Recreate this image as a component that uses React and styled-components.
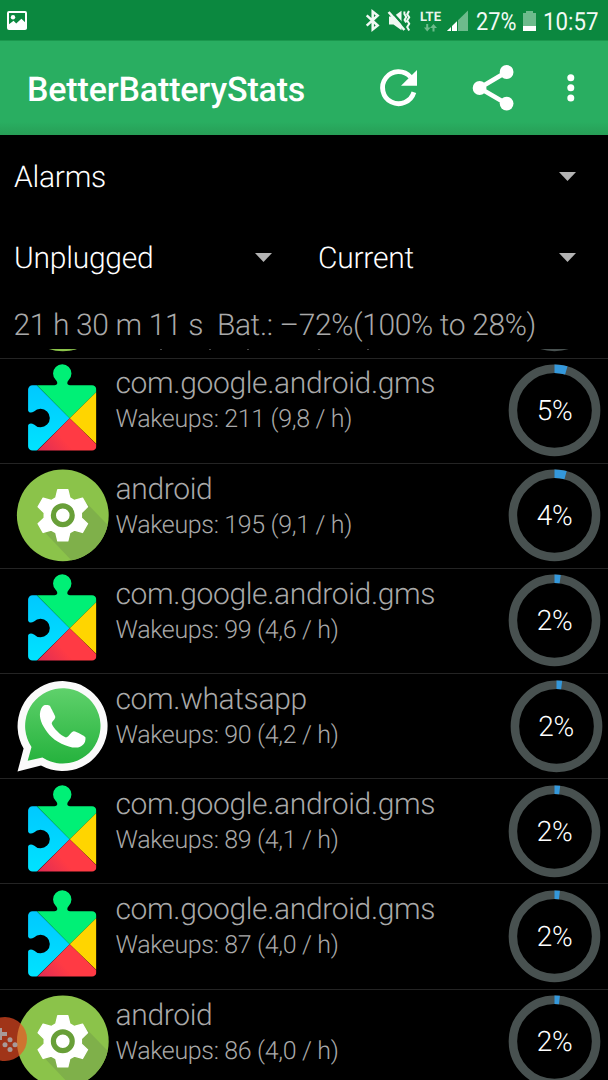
import React from 'react';
import styled, { createGlobalStyle } from 'styled-components';

const GlobalStyle = createGlobalStyle`
    * { box-sizing: border-box; }
    html, body {
        margin: 0;
        background: #000;
        overflow: hidden;
        font-family: Roboto, "Liberation Sans", sans-serif;
        text-rendering: geometricPrecision;
    }
    svg { display: block; flex: none; }
`

const Screen = styled.div`
    position: relative;
    display: flex;
    flex-direction: column;
    width: 608px;
    height: 1080px;
    overflow: hidden;
    background: #000;
`

const StatusBar = styled.div`
    display: flex;
    justify-content: space-between;
    height: 41px;
    background: #0b883f;
    border-bottom: 1px solid #1b984e;
`

const StatusGroup = styled.div`
    display: flex;
    height: 40px;
`

const StatusText = styled.span`
    display: block;
    width: ${props => props.$width}px;
    margin-left: ${props => props.$gap}px;
    font-size: 25px;
    line-height: 45px;
    color: #f3faf5;
    white-space: nowrap;
    transform: scaleX(${props => props.$squeeze});
    transform-origin: 0 0;
`

const Network = styled.div`
    width: 24px;
    margin-left: 8px;
    padding-top: 11px;
    font-size: 13px;
    font-weight: 700;
    line-height: 13px;
    color: #e7f4ec;
`

const Toolbar = styled.header`
    display: flex;
    align-items: center;
    height: 94px;
    padding-left: 27px;
    background: linear-gradient(#29ae61 86%, #279e56);
`

const Title = styled.h1`
    flex: 1;
    margin: 0;
    padding-top: 3px;
    font-size: 34px;
    font-weight: 500;
    letter-spacing: -0.17px;
    color: #fff;
`

const SpinnerRow = styled.div`
    display: flex;
    height: ${props => props.$height}px;
`

const Spinner = styled.div`
    display: flex;
    flex: 1;
    align-items: center;
    justify-content: space-between;
    padding: 0 32px 0 14px;
    font-size: 30px;
    font-weight: 300;
    letter-spacing: -0.24px;
    color: #fff;
`

const SpinnerText = styled.span`
    padding-top: 2px;
`

const Summary = styled.div`
    height: 51px;
    padding-left: 13.500px;
    font-size: 30px;
    font-weight: 300;
    line-height: 56px;
    letter-spacing: -0.37px;
    color: #a9a9a9;
    white-space: pre;
`

const List = styled.div`
    flex: 1;
    min-height: 0;
    overflow: hidden;
`

const Item = styled.div`
    display: flex;
    height: 105.2px;
    margin-top: ${props => props.$scrolled || 0}px;
    padding: 5.6px 7px 0 16px;
    border-top: 1px solid #242424;
`

const Details = styled.div`
    position: relative;
    flex: 1;
    padding-left: 6.500px;
    font-weight: 300;
    letter-spacing: -0.35px;
    color: #a9a9a9;
    white-space: nowrap;
`

const Name = styled.div`
    margin-top: 2.400px;
    font-size: 30px;
    line-height: 36px;
`

const Wakeups = styled.div`
    font-size: 25px;
    line-height: 35px;
`

// descender tip of the line that is scrolled under the header
const Tip = styled.span`
    position: absolute;
    left: ${props => props.$x}px;
    top: 90px;
    width: 2px;
    height: 1.500px;
    background: #4a4a4a;
`

const RingBox = styled.div`
    position: relative;
    width: 93px;
    height: 93px;
    margin-right: ${props => props.$shift ? -1.500 : 0}px;
`

const RingLabel = styled.span`
    position: absolute;
    inset: 0;
    font-size: 28px;
    font-weight: 300;
    line-height: 94px;
    letter-spacing: -0.3px;
    text-align: center;
    color: #fff;
`

const Bubble = styled.div`
    position: absolute;
    left: -17px;
    top: 1017px;
    width: 44px;
    height: 44px;
    border-radius: 50%;
    background: rgba(239, 78, 36, 0.67);
`

const PictureIcon = () => (
    <svg width="34" height="40" viewBox="0 0 34 40">
        <rect x="8" y="12" width="18" height="17" rx="1" fill="none" stroke="#fff" strokeWidth="2" />
        <circle cx="13" cy="17.2" r="2.2" fill="#fff" />
        <path d="M8 25l5.6-4.2 2.6 2.6 5.2-4.6 5 4.6V29H8z" fill="#fff" />
    </svg>
)

const StatusIcons = () => (
    <svg width="50" height="40" viewBox="362 0 50 40">
        <path d="M366.700 15.300l11 10.200-5 4V11.500l5 4-11 10.200" fill="none" stroke="#f0f8f3" strokeWidth="2.500" />
        <path d="M389 16.500h4.500l8-5.800v19.600l-8-5.800H389z" fill="#f0f8f3" />
        <path d="M390.500 10.500l16 18" stroke="#0b883f" strokeWidth="2.400" />
        <path d="M388.600 12l15.800 18" stroke="#f0f8f3" strokeWidth="2.600" />
        <path d="M404.400 11.500v2.500l1.800 3-1.600 3 1.600 2.500M409 11l-1.800 3.200 2 3-2 3.400 2 3.200-2 3.200 2 3.400" fill="none" stroke="#f0f8f3" strokeWidth="2" />
    </svg>
)

const Arrows = () => (
    <svg width="22" height="8" viewBox="0 0 22 8">
        <path d="M6.200 0h2v3.500h2.400L7.200 7.500 4 3.500h2.200zM12.500 7.500h2V4H17L13.500 0l-3.400 4h2.400z" fill="#6dbb8c" />
    </svg>
)

const SignalIcon = () => (
    <svg width="26" height="40" viewBox="444 0 26 40">
        <path d="M447 31L468 10.500V31z" fill="#6dbb8c" />
        <path d="M447 31l10-9.800V31z" fill="#fff" />
        <path d="M451.500 25v6M457.500 20v11" stroke="#0b883f" strokeWidth="1" />
    </svg>
)

const BatteryIcon = () => (
    <svg width="18" height="40" viewBox="520 0 18 40">
        <path d="M526 11h7v2h3v18h-13V13h3z" fill="#6dbb8c" />
        <path d="M523 26h13v5h-13z" fill="#fff" />
    </svg>
)

const ToolbarIcons = () => (
    <svg width="238" height="94" viewBox="370 41 238 94">
        <path d="M413.900 92.300A16 16 0 1 1 410.500 77" fill="none" stroke="#fff" strokeWidth="4.800" />
        <path d="M417 70v15.700h-16z" fill="#fff" />
        <path d="M506.500 72L479.500 88l27 15.700" fill="none" stroke="#fff" strokeWidth="4.600" />
        <g fill="#fff">
            <circle cx="506.600" cy="72" r="6.900" />
            <circle cx="479.600" cy="88" r="6.900" />
            <circle cx="506.600" cy="103.600" r="6.900" />
            <circle cx="570.800" cy="77.700" r="3.500" />
            <circle cx="570.800" cy="87.800" r="3.500" />
            <circle cx="570.800" cy="98" r="3.500" />
        </g>
    </svg>
)

const Caret = () => (
    <svg width="17" height="9" viewBox="0 0 17 9">
        <path d="M0 0h17L8.500 9z" fill="#b3b3b3" />
    </svg>
)

const PlayServicesIcon = ({ id }) => (
    <svg width="93" height="93" viewBox="16 364 93 93">
        <defs>
            <linearGradient id={`blue${id}`} x1="0" y1="0" x2="0" y2="1">
                <stop offset="0" stopColor="#00c0ff" />
                <stop offset="1" stopColor="#00e3ff" />
            </linearGradient>
            <linearGradient id={`red${id}`} x1="0" y1="1" x2="1" y2="0.5">
                <stop offset="0" stopColor="#dd2c55" />
                <stop offset="0.5" stopColor="#ff3a44" />
            </linearGradient>
            <clipPath id={`piece${id}`}>
                <path d="M32.500 385.200H54.500C57.500 385.200 58.200 382.500 55.800 380A9.200 9.200 0 1 1 68.700 380C66.400 382.500 67 385.200 70 385.200H92A4.400 4.400 0 0 1 96.400 389.600V446.200A4.400 4.400 0 0 1 92 450.600H32.500A4.400 4.400 0 0 1 28.100 446.200V425.500C28.500 423.500 31 422.500 34 424.400A9.200 9.200 0 1 0 34 411.600C31 413.500 28.500 412.500 28.100 410.500V389.600A4.400 4.400 0 0 1 32.500 385.200Z" />
            </clipPath>
        </defs>
        <g clipPath={`url(#piece${id})`}>
            <path d="M28 364v87h8.500l33.200-32.700L37 385.500z" fill={`url(#blue${id})`} />
            <path d="M50 364h46.400v28L69.700 418.300 37 385.200z" fill="#00f076" />
            <path d="M96.400 392v52L69.700 418.300z" fill="#ffd500" />
            <path d="M37 451l32.700-32.700 26.700 25.900V451z" fill={`url(#red${id})`} />
        </g>
    </svg>
)

// outline of the six-toothed cog, centred on 0,0
const gearPath = () => {
    let d = '';
    for (let i = 0; i < 6; i++) {
        const a = (i * Math.PI) / 3;
        [[-7, -17.4], [-5, -25.6], [5, -25.6], [7, -17.4]].forEach(([x, y]) => {
            const px = x * Math.cos(a) - y * Math.sin(a);
            const py = x * Math.sin(a) + y * Math.cos(a);
            d += `${d ? 'L' : 'M'}${px.toFixed(2)} ${py.toFixed(2)}`;
        });
    }
    return d + 'Z';
}

const AndroidIcon = ({ id }) => (
    <svg width="93" height="93" viewBox="-46.800 -46.300 93 93">
        <clipPath id={`disc${id}`}>
            <circle r="45.900" />
        </clipPath>
        <circle r="45.900" fill="#8bc34a" />
        <path d="M22-14L60 25 40 78 -20 15z" fill="#7fb04a" clipPath={`url(#disc${id})`} />
        <path d={gearPath()} fill="#fff" stroke="#fff" strokeWidth="1.400" strokeLinejoin="round" />
        <circle r="9.400" fill="#fff" stroke="#689f38" strokeWidth="5.200" />
    </svg>
)

const WhatsAppIcon = () => (
    <svg width="93" height="93" viewBox="16 679.600 93 93">
        <defs>
            <linearGradient id="chat" x1="0" y1="0" x2="0" y2="1">
                <stop offset="0" stopColor="#5fd16b" />
                <stop offset="1" stopColor="#25b23d" />
            </linearGradient>
        </defs>
        <path d="M17.500 771.200L23.600 748.200A45 45 0 1 1 41 765.200Z" fill="#fafafa" />
        <path d="M27.700 760.400L31.500 746.500A37.700 37.700 0 1 1 42.400 757.200Z" fill="url(#chat)" />
        <path d="M44 704.800C46 704.300 48.700 704.300 50 705.500C51.500 708.500 54.500 714 55.200 716C55.700 718.500 52.300 720.500 51.700 722.800C52.500 727 61 735.500 66 737C69 737 70.500 731.500 73.700 730.900C77 731.500 84.500 735.500 85.500 737C85.800 743 82.500 745.500 78 747C70 748.500 55.500 741.500 49.500 734.500C43.500 727.500 39.500 719.500 39.900 713.500C40.200 709.500 41.500 706.500 44 704.800Z" fill="#fff" />
    </svg>
)

const Ring = ({ percent, shift, label = true }) => {
    const r = 41.6;
    const arc = 2 * Math.PI * r;
    return (
        <RingBox $shift={shift}>
            <svg width="93" height="93" viewBox="0 0 93 93">
                <circle cx="46.500" cy="46.300" r={r} fill="none" stroke="#485150" strokeWidth="8.500" />
                <circle cx="46.500" cy="46.300" r={r} fill="none" stroke="#3498db" strokeWidth="8.500"
                    strokeDasharray={`${arc * percent / 100} ${arc}`} transform="rotate(-90 46.500 46.300)" />
            </svg>
            {label ? <RingLabel>{Math.round(percent)}%</RingLabel> : null}
        </RingBox>
    );
}

const icons = {
    'com.google.android.gms': PlayServicesIcon,
    'android': AndroidIcon,
    'com.whatsapp': WhatsAppIcon
};

const alarms = [
    { name: 'com.google.android.gms', wakeups: '211 (9,8 / h)', percent: 4.6 },
    { name: 'android', wakeups: '195 (9,1 / h)', percent: 4.3 },
    { name: 'com.google.android.gms', wakeups: '99 (4,6 / h)', percent: 2.2 },
    { name: 'com.whatsapp', wakeups: '90 (4,2 / h)', percent: 2 },
    { name: 'com.google.android.gms', wakeups: '89 (4,1 / h)', percent: 2 },
    { name: 'com.google.android.gms', wakeups: '87 (4,0 / h)', percent: 1.9 },
    { name: 'android', wakeups: '86 (4,0 / h)', percent: 1.9 }
];

const App = () => {
    return (
        <Screen>
            <GlobalStyle />
            <StatusBar>
                <PictureIcon />
                <StatusGroup>
                    <StatusIcons />
                    <Network>LTE<Arrows /></Network>
                    <SignalIcon />
                    <StatusText $gap={6} $width={44} $squeeze={0.87}>27%</StatusText>
                    <BatteryIcon />
                    <StatusText $gap={5} $width={65} $squeeze={0.89}>10:57</StatusText>
                </StatusGroup>
            </StatusBar>
            <Toolbar>
                <Title>BetterBatteryStats</Title>
                <ToolbarIcons />
            </Toolbar>
            <SpinnerRow $height={82}>
                <Spinner><SpinnerText>Alarms</SpinnerText><Caret /></Spinner>
            </SpinnerRow>
            <SpinnerRow $height={81}>
                <Spinner><SpinnerText>Unplugged</SpinnerText><Caret /></Spinner>
                <Spinner><SpinnerText>Current</SpinnerText><Caret /></Spinner>
            </SpinnerRow>
            <Summary>21 h 30 m 11 s  Bat.: –72%(100% to 28%)</Summary>
            <List>
                <Item $scrolled={-96.7}>
                    <AndroidIcon id="top" />
                    <Details>
                        {[51, 100, 138, 209, 258].map(x => <Tip key={x} $x={x} />)}
                    </Details>
                    <Ring percent={0} label={false} />
                </Item>
                {alarms.map((alarm, i) => {
                    const Icon = icons[alarm.name];
                    return (
                        <Item key={i}>
                            <Icon id={i} />
                            <Details>
                                <Name>{alarm.name}</Name>
                                <Wakeups>Wakeups: {alarm.wakeups}</Wakeups>
                            </Details>
                            <Ring percent={alarm.percent} shift={alarm.name === 'com.whatsapp'} />
                        </Item>
                    );
                })}
            </List>
            <Bubble>
                <svg width="44" height="44" viewBox="-17 1017 44 44">
                    <path d="M-2 1028h4v4h5v4H2v4h-4z" fill="#a89a98" />
                    <g fill="#a89a98">
                        <circle cx="10" cy="1039.700" r="2.500" />
                        <circle cx="5" cy="1044.700" r="2.500" />
                        <circle cx="15" cy="1044.700" r="2.500" />
                        <circle cx="10" cy="1049.500" r="2.500" />
                    </g>
                </svg>
            </Bubble>
        </Screen>
    );
}

export default App;
